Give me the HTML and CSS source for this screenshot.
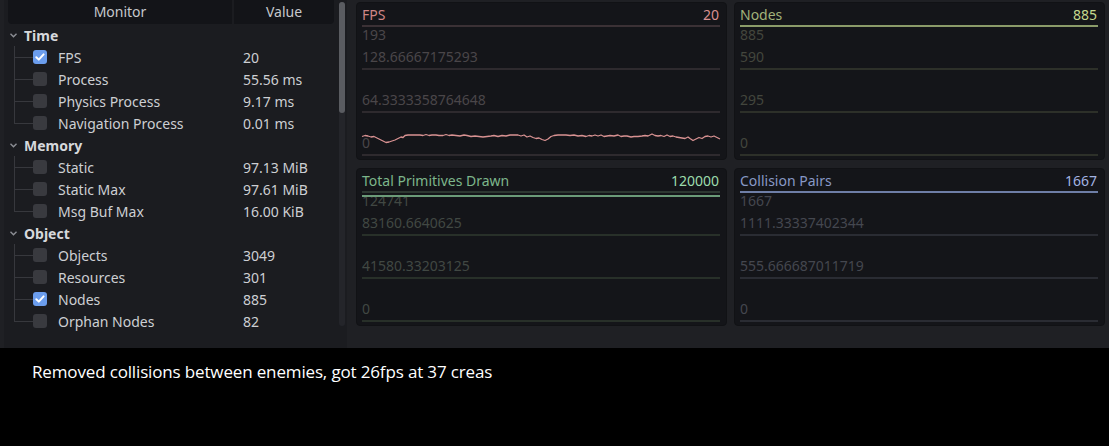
FILE: index.html
```html
<!DOCTYPE html>
<html>
<head>
<meta charset="utf-8">
<link rel="stylesheet" href="styles.css">
</head>
<body>
<div class="editor">
  <div class="tree-panel">
    <div class="tree">
      <div class="tree-head">
        <div class="th th-name">Monitor</div>
        <div class="th th-val">Value</div>
      </div>

      <div class="cat"><svg class="arrow" width="7" height="5" viewBox="0 0 7 5"><polyline points="0.5,0.8 3.5,3.8 6.5,0.8" fill="none" stroke="#8d8f95" stroke-width="1.4"/></svg><span>Time</span></div>
      <div class="row"><div class="name"><span class="branch"></span><span class="check on"><svg width="14" height="14" viewBox="0 0 14 14"><polyline points="3.3,7.2 5.8,9.6 10.6,4.4" fill="none" stroke="#fff" stroke-width="2" stroke-linecap="round" stroke-linejoin="round"/></svg></span><span class="label">FPS</span></div><span class="val">20</span></div>
      <div class="row"><div class="name"><span class="branch"></span><span class="check"></span><span class="label">Process</span></div><span class="val">55.56 ms</span></div>
      <div class="row"><div class="name"><span class="branch"></span><span class="check"></span><span class="label">Physics Process</span></div><span class="val">9.17 ms</span></div>
      <div class="row last"><div class="name"><span class="branch"></span><span class="check"></span><span class="label">Navigation Process</span></div><span class="val">0.01 ms</span></div>

      <div class="cat"><svg class="arrow" width="7" height="5" viewBox="0 0 7 5"><polyline points="0.5,0.8 3.5,3.8 6.5,0.8" fill="none" stroke="#8d8f95" stroke-width="1.4"/></svg><span>Memory</span></div>
      <div class="row"><div class="name"><span class="branch"></span><span class="check"></span><span class="label">Static</span></div><span class="val">97.13 MiB</span></div>
      <div class="row"><div class="name"><span class="branch"></span><span class="check"></span><span class="label">Static Max</span></div><span class="val">97.61 MiB</span></div>
      <div class="row last"><div class="name"><span class="branch"></span><span class="check"></span><span class="label">Msg Buf Max</span></div><span class="val">16.00 KiB</span></div>

      <div class="cat"><svg class="arrow" width="7" height="5" viewBox="0 0 7 5"><polyline points="0.5,0.8 3.5,3.8 6.5,0.8" fill="none" stroke="#8d8f95" stroke-width="1.4"/></svg><span>Object</span></div>
      <div class="row"><div class="name"><span class="branch"></span><span class="check"></span><span class="label">Objects</span></div><span class="val">3049</span></div>
      <div class="row"><div class="name"><span class="branch"></span><span class="check"></span><span class="label">Resources</span></div><span class="val">301</span></div>
      <div class="row"><div class="name"><span class="branch"></span><span class="check on"><svg width="14" height="14" viewBox="0 0 14 14"><polyline points="3.3,7.2 5.8,9.6 10.6,4.4" fill="none" stroke="#fff" stroke-width="2" stroke-linecap="round" stroke-linejoin="round"/></svg></span><span class="label">Nodes</span></div><span class="val">885</span></div>
      <div class="row last"><div class="name"><span class="branch"></span><span class="check"></span><span class="label">Orphan Nodes</span></div><span class="val">82</span></div>
    </div>
    <div class="vscroll"><div class="grabber"></div></div>
  </div>

  <div class="graphs">
    <div class="graph fps">
      <div class="g-head"><span>FPS</span><span class="g-value">20</span></div>
      <div class="band first"><span class="axis">193</span><span class="axis">128.66667175293</span></div>
      <div class="band"><span class="axis">64.3333358764648</span></div>
      <div class="band"><span class="axis">0</span></div>
      <svg class="plot" viewBox="357 3 369 156" preserveAspectRatio="none">
        <polyline fill="none" stroke="#d99292" stroke-width="1.3" stroke-linejoin="round" points="362,136.5 365,135.5 368,136 371,137 374,136.5 377,138 380,139.5 383,141 386,142.5 389,142 392,141 395,140 398,138.5 401,137 403,137.5 405,135.5 408,135 412,135 416,135 420,135 423,135.5 426,134.5 429,135.5 432,135 436,135 439,135.5 443,135.5 446,134.5 449,135.5 452,135 456,135.5 460,136 464,135 467,135.5 471,136.5 475,136 479,136.5 483,137 487,136.5 491,136 494,135.5 498,136.5 502,135.5 506,136 510,135 514,135 518,135 521,136 524,135 527,137 530,136 533,137.5 536,138.5 539,138 542,139.5 545,140.5 548,139 551,136.5 554,135.5 558,135 562,135 566,135 570,135.5 574,135 578,136 582,135.5 586,136.5 589,135.5 592,136 595,135 598,136 601,135 604,136.5 607,136 610,135.5 614,136 618,135 621,136.5 624,136 627,136 631,137 634,136.5 638,136.5 642,136 645,135.5 648,136 652,134 655,135.5 658,136 661,135.5 664,136.5 667,135 670,136.5 673,136 676,137 679,137.5 682,138 685,138.5 688,137 690,138.5 693,140.5 696,139 699,137.5 702,138.5 705,136.5 708,136 711,137 714,136 717,137.5 720,139"/>
      </svg>
    </div>
    <div class="graph nodes">
      <div class="g-head"><span>Nodes</span><span class="g-value">885</span></div>
      <div class="band first"><span class="axis">885</span><span class="axis">590</span></div>
      <div class="band"><span class="axis">295</span></div>
      <div class="band"><span class="axis">0</span></div>
    </div>
    <div class="graph prims">
      <div class="g-head"><span>Total Primitives Drawn</span><span class="g-value">120000</span></div>
      <div class="band first"><span class="axis">124741</span><span class="axis">83160.6640625</span></div>
      <div class="band"><span class="axis">41580.33203125</span></div>
      <div class="band"><span class="axis">0</span></div>
      <div class="hilite"></div>
    </div>
    <div class="graph coll">
      <div class="g-head"><span>Collision Pairs</span><span class="g-value">1667</span></div>
      <div class="band first"><span class="axis">1667</span><span class="axis">1111.33337402344</span></div>
      <div class="band"><span class="axis">555.666687011719</span></div>
      <div class="band"><span class="axis">0</span></div>
    </div>
  </div>
</div>
<div class="caption">Removed collisions between enemies, got 26fps at 37 creas</div>
</body>
</html>
```
FILE: styles.css
```css
html, body {
  margin: 0;
  padding: 0;
  background: #000;
}
body {
  width: 1109px;
  height: 446px;
  overflow: hidden;
  font-family: "Noto Sans", "DejaVu Sans", sans-serif;
  font-size: 14px;
}
.editor {
  height: 348px;
  background: #1f2024;
  display: flex;
  align-items: flex-start;
  padding-left: 4px;
  box-sizing: border-box;
  overflow: hidden;
}
.tree-panel {
  width: 343px;
  height: 348px;
  background: #1b1c20;
  display: flex;
  flex-shrink: 0;
}
.tree {
  width: 331px;
  color: #cdcfd3;
}
.tree-head {
  display: flex;
  height: 24px;
  margin-left: 4px;
  gap: 2px;
}
.th {
  background: #131418;
  color: #c6c8cc;
  display: flex;
  align-items: center;
  justify-content: center;
  line-height: 20px;
}
.th-name { width: 224px; border-radius: 0 0 0 4px; }
.th-val { width: 100px; border-radius: 0 0 4px 0; }
.cat {
  height: 22px;
  display: flex;
  align-items: center;
  padding-left: 6px;
  font-weight: bold;
  color: #d6d8dc;
}
.arrow { margin-right: 7px; }
.row {
  height: 22px;
  display: flex;
  align-items: center;
}
.name {
  width: 239px;
  height: 100%;
  display: flex;
  align-items: center;
  padding-left: 10px;
  box-sizing: border-box;
}
.branch {
  width: 19px;
  align-self: stretch;
  position: relative;
}
.branch::before {
  content: "";
  position: absolute;
  left: 0;
  top: 0;
  bottom: 0;
  width: 1px;
  background: #37383d;
}
.row.last .branch::before { bottom: 11px; }
.branch::after {
  content: "";
  position: absolute;
  left: 0;
  right: 0;
  top: 11px;
  height: 1px;
  background: #37383d;
}
.check {
  width: 14px;
  height: 14px;
  border-radius: 3px;
  background: #393a3f;
  margin-right: 11px;
  display: block;
}
.check svg { display: block; }
.check.on { background: #6b9ded; }
.label, .val { white-space: nowrap; }
.vscroll {
  width: 6px;
  margin: 2px 0 0 4px;
  height: 324px;
  background: #24252a;
  border-radius: 3px;
}
.grabber {
  height: 111px;
  background: #5a5c61;
  border-radius: 3px;
}
.graphs {
  display: grid;
  grid-template-columns: 371px 371px;
  grid-template-rows: 158px 158px;
  gap: 8px 7px;
  padding: 2px 0 0 9px;
}
.graph {
  position: relative;
  background: #141519;
  border: 1px solid #111215;
  border-radius: 4px;
  padding: 0 6px 0 5px;
}
.g-head {
  display: flex;
  justify-content: space-between;
  height: 20px;
  line-height: 20px;
  padding: 2px 1px 0 0;
  box-sizing: content-box;
  border-bottom: 2px solid;
}
.band {
  height: 43px;
  box-sizing: border-box;
  border-bottom: 2px solid;
  display: flex;
  flex-direction: column;
  justify-content: flex-end;
  padding-bottom: 3px;
}
.band.first { justify-content: space-between; padding-top: 0; }
.axis {
  line-height: 16px;
  white-space: nowrap;
}
.plot {
  position: absolute;
  left: 0;
  top: 0;
  width: 369px;
  height: 156px;
}
.fps .g-head { color: #d08686; border-color: #3b3135; }
.fps .g-value { color: #da9090; }
.fps .band { border-color: #2e2a2e; }
.fps .axis { color: #4a4649; }

.nodes .g-head { color: #a2b37a; border-color: #8b9b69; }
.nodes .g-value { color: #c6d98e; }
.nodes .band { border-color: #2d3029; }
.nodes .axis { color: #43463d; }

.prims .g-head { color: #7db68b; border-color: #2d3831; }
.prims .g-value { color: #9bdcac; }
.prims .band { border-color: #283029; }
.prims .axis { color: #414843; }
.hilite {
  position: absolute;
  left: 5px;
  right: 6px;
  top: 26px;
  height: 2px;
  background: #6b9b78;
}

.coll .g-head { color: #8899c6; border-color: #6e7ea6; }
.coll .g-value { color: #a3b3e2; }
.coll .band { border-color: #2a2c33; }
.coll .axis { color: #44474f; }

.caption {
  color: #fff;
  font-family: "Open Sans", "Noto Sans", sans-serif;
  font-size: 17px;
  letter-spacing: -0.15px;
  padding: 13px 0 0 32px;
  line-height: 22px;
}
```
